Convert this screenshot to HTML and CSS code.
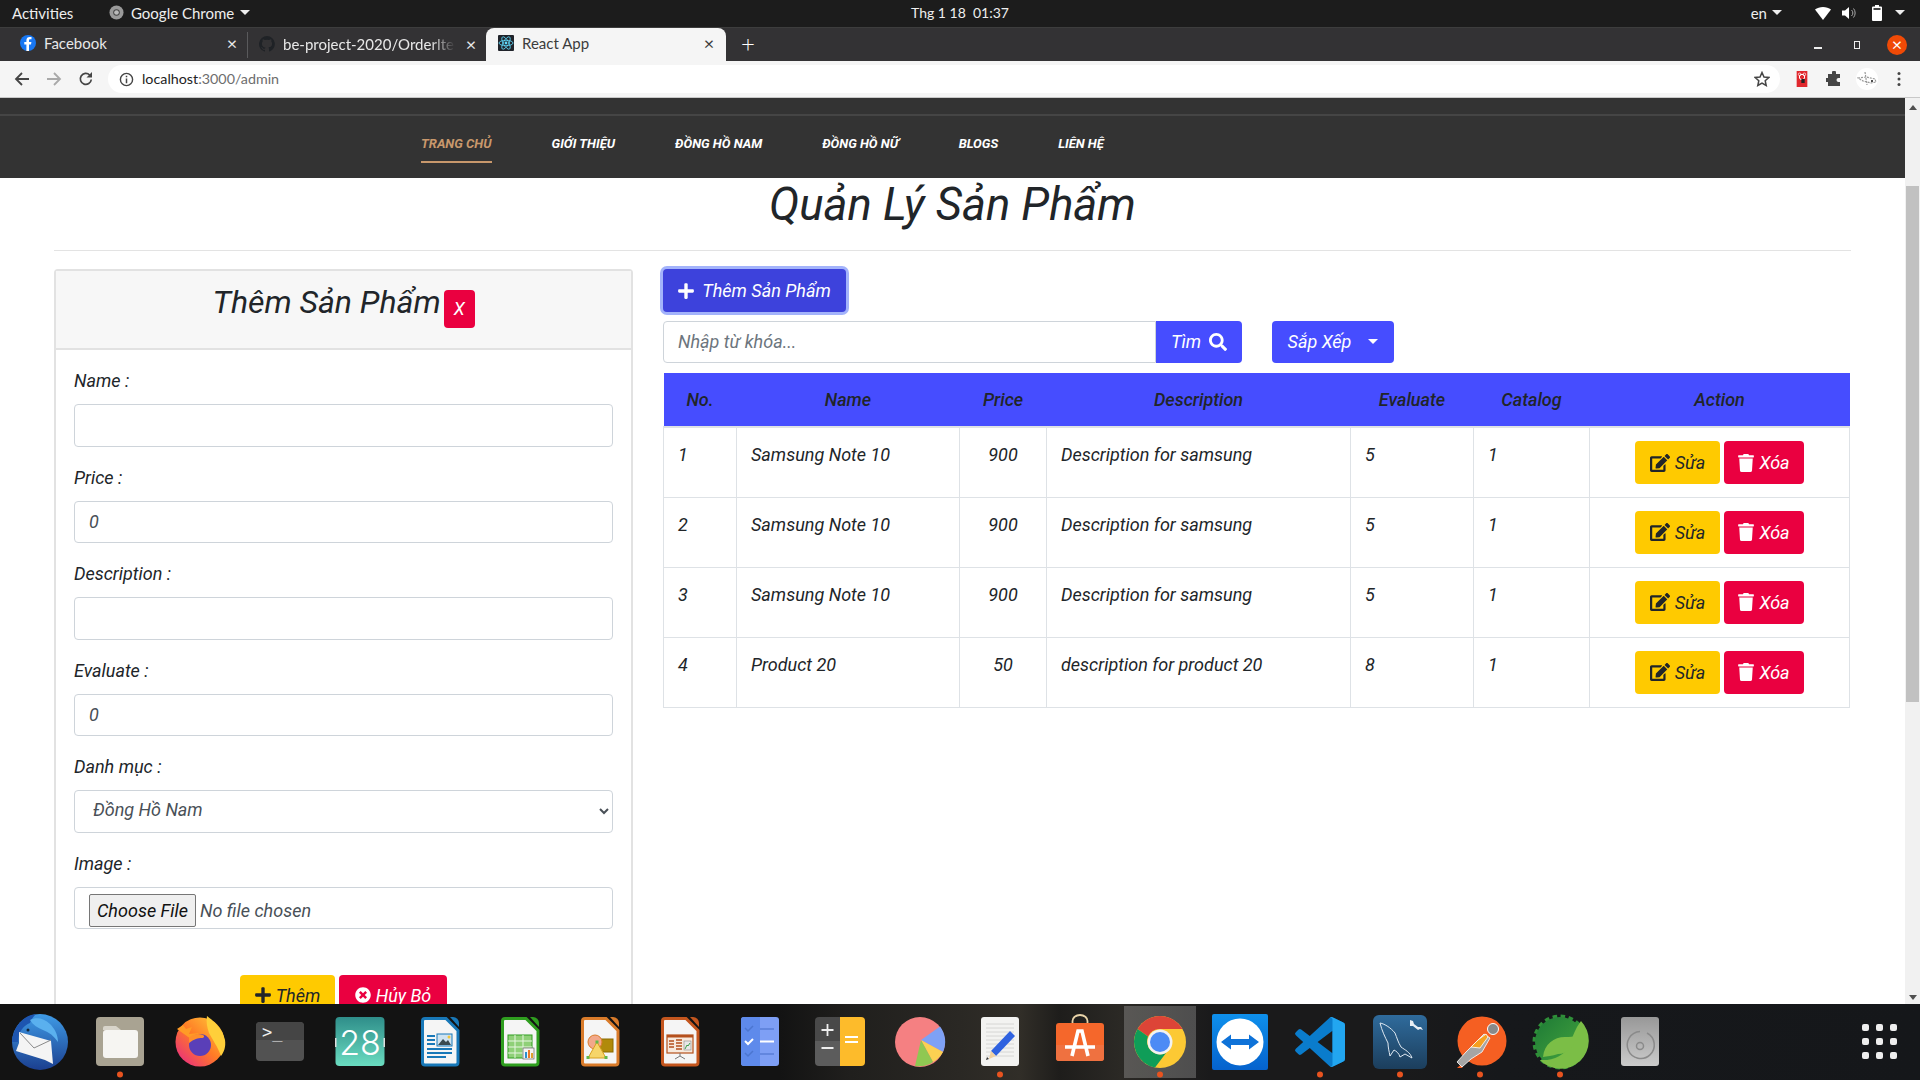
FILE: index.html
```html
<!DOCTYPE html>
<html lang="vi">
<head>
<meta charset="utf-8">
<title>React App</title>
<link rel="stylesheet" href="styles.css">
</head>
<body>
<svg class="sprite" aria-hidden="true">
  <defs>
    <symbol id="i-plus" viewBox="0 0 448 512"><path fill="currentColor" d="M416 208H272V64c0-17.67-14.33-32-32-32h-32c-17.67 0-32 14.33-32 32v144H32c-17.67 0-32 14.33-32 32v32c0 17.67 14.33 32 32 32h144v144c0 17.67 14.33 32 32 32h32c17.67 0 32-14.33 32-32V304h144c17.67 0 32-14.33 32-32v-32c0-17.67-14.33-32-32-32z"/></symbol>
    <symbol id="i-search" viewBox="0 0 512 512"><path fill="currentColor" d="M505 442.7L405.3 343c-4.5-4.5-10.6-7-17-7H372c27.6-35.3 44-79.7 44-128C416 93.1 322.9 0 208 0S0 93.1 0 208s93.1 208 208 208c48.3 0 92.7-16.4 128-44v16.3c0 6.4 2.5 12.5 7 17l99.7 99.7c9.4 9.4 24.6 9.4 33.9 0l28.3-28.3c9.4-9.4 9.4-24.6.1-34zM208 336c-70.7 0-128-57.2-128-128 0-70.7 57.2-128 128-128 70.7 0 128 57.2 128 128 0 70.7-57.2 128-128 128z"/></symbol>
    <symbol id="i-edit" viewBox="0 0 576 512"><path fill="currentColor" d="M402.6 83.2l90.2 90.2c3.8 3.8 3.8 10 0 13.8L274.4 405.6l-92.8 10.3c-12.4 1.4-22.9-9.1-21.5-21.5l10.3-92.8L388.8 83.2c3.8-3.8 10-3.8 13.8 0zm162-22.9l-48.8-48.8c-15.2-15.2-39.9-15.2-55.2 0l-35.4 35.4c-3.8 3.8-3.8 10 0 13.8l90.2 90.2c3.8 3.8 10 3.8 13.8 0l35.4-35.4c15.2-15.3 15.2-40 0-55.2zM384 346.2V448H64V128h229.8c3.2 0 6.2-1.3 8.5-3.5l40-40c7.6-7.6 2.2-20.5-8.5-20.5H48C21.5 64 0 85.5 0 112v352c0 26.5 21.5 48 48 48h352c26.5 0 48-21.5 48-48V306.2c0-10.7-12.9-16-20.5-8.5l-40 40c-2.2 2.3-3.5 5.3-3.5 8.5z"/></symbol>
    <symbol id="i-trash" viewBox="0 0 448 512"><path fill="currentColor" d="M432 32H312l-9.4-18.7A24 24 0 0 0 281.1 0H166.8a23.72 23.72 0 0 0-21.4 13.3L136 32H16A16 16 0 0 0 0 48v32a16 16 0 0 0 16 16h416a16 16 0 0 0 16-16V48a16 16 0 0 0-16-16zM53.2 467a48 48 0 0 0 47.9 45h245.8a48 48 0 0 0 47.9-45L416 128H32z"/></symbol>
    <symbol id="i-times" viewBox="0 0 512 512"><path fill="currentColor" d="M256 8C119 8 8 119 8 256s111 248 248 248 248-111 248-248S393 8 256 8zm121.6 313.1c4.7 4.7 4.7 12.3 0 17L338 377.6c-4.7 4.7-12.3 4.7-17 0L256 312l-65.1 65.6c-4.7 4.7-12.3 4.7-17 0L134.4 338c-4.7-4.7-4.7-12.3 0-17l65.6-65-65.6-65.1c-4.7-4.7-4.7-12.3 0-17l39.6-39.6c4.7-4.7 12.3-4.7 17 0l65 65.7 65.1-65.6c4.7-4.7 12.3-4.7 17 0l39.6 39.6c4.7 4.7 4.7 12.3 0 17L312 256l65.6 65.1z"/></symbol>
    <symbol id="i-dot" viewBox="0 0 80 76"><circle cx="40" cy="70.500" r="3" fill="#e8531f"/></symbol>
    <linearGradient id="g-tb" x1="0" y1="0" x2="0" y2="1"><stop offset="0" stop-color="#3f9be6"/><stop offset="1" stop-color="#1b3f8f"/></linearGradient>
    <linearGradient id="g-ff" x1="1" y1="0" x2="0" y2="1"><stop offset="0" stop-color="#ffd23a"/><stop offset=".5" stop-color="#ff7a26"/><stop offset="1" stop-color="#e5208f"/></linearGradient>
    <linearGradient id="g-cal" x1="0" y1="0" x2="0" y2="1"><stop offset="0" stop-color="#2f8e8a"/><stop offset="1" stop-color="#6adcc0"/></linearGradient>
    <linearGradient id="g-tv" x1="0" y1="0" x2="0" y2="1"><stop offset="0" stop-color="#0e90ec"/><stop offset="1" stop-color="#0562cd"/></linearGradient>
    <linearGradient id="g-my" x1="0" y1="0" x2="0" y2="1"><stop offset="0" stop-color="#2f6b9c"/><stop offset="1" stop-color="#1c3e5c"/></linearGradient>
    <linearGradient id="g-disk" x1="0" y1="0" x2="0" y2="1"><stop offset="0" stop-color="#989898"/><stop offset="1" stop-color="#cbcbcb"/></linearGradient>
    <linearGradient id="g-spring" x1="0" y1="0" x2="1" y2="1"><stop offset="0" stop-color="#1d7a36"/><stop offset=".7" stop-color="#3c9a3c"/></linearGradient>
    <symbol id="doc" viewBox="0 0 80 76"><path d="M25 14.500h21l12 12v32a2.500 2.500 0 0 1-2.500 2.500h-30.500a2.500 2.500 0 0 1-2.500-2.500v-41.500a2.500 2.500 0 0 1 2.500-2.500z" fill="#f5f5f5" stroke="currentColor" stroke-width="3"/><path d="M50 13h3a6 6 0 0 1 6 6v4z" fill="currentColor"/></symbol>
  </defs>
</svg>

<header class="topbar">
  <div class="top-left">
    <span class="top-activities">Activities</span>
    <span class="top-app">
      <svg class="top-chrome" viewBox="0 0 16 16"><circle cx="8" cy="8" r="7.500" fill="#9a9a9a"/><circle cx="8" cy="8" r="3.500" fill="#444"/><circle cx="8" cy="8" r="2.500" fill="#bbb"/></svg>
      Google Chrome <i class="caret"></i>
    </span>
  </div>
  <span class="top-clock">Thg 1 18&nbsp; 01:37</span>
  <div class="top-tray">
    <span class="top-lang">en <i class="caret"></i></span>
    <svg class="tray-wifi" viewBox="0 0 16 14"><path d="M0 3.500C4 0 12 0 16 3.500L8 14z" fill="#fff"/></svg>
    <svg class="tray-sound" viewBox="0 0 16 14"><path d="M0 4.500h3L7 1v12L3 9.500H0z" fill="#fff"/><path d="M9.500 4a4 4 0 0 1 0 6M11.500 2.500a7 7 0 0 1 0 9" stroke="#aaa" stroke-width="1" fill="none"/></svg>
    <svg class="tray-batt" viewBox="0 0 10 16"><path d="M3 0h4v1.500h2a1 1 0 0 1 1 1v12.500a1 1 0 0 1-1 1H1a1 1 0 0 1-1-1V2.500a1 1 0 0 1 1-1h2z" fill="#fff"/><rect x="1.500" y="3" width="7" height="2" fill="#444"/></svg>
    <i class="caret"></i>
  </div>
</header>

<div class="tabstrip">
  <div class="tab tab-fb">
    <svg class="fav" viewBox="0 0 16 16"><circle cx="8" cy="8" r="8" fill="#1877f2"/><path d="M9 16V9.500h2l.4-2.500H9V5.600c0-.8.3-1.300 1.400-1.300h1.100V2.100C11 2 10.300 2 9.700 2 7.700 2 6.400 3.200 6.400 5.300V7H4.300v2.500h2.100V16z" fill="#fff"/></svg>
    <span class="tab-title">Facebook</span><span class="tab-x">×</span>
  </div>
  <div class="tab tab-gh">
    <svg class="fav" viewBox="0 0 16 16"><path d="M8 0a8 8 0 0 0-2.500 15.600c.4.100.5-.2.500-.4v-1.400c-2.200.5-2.700-1-2.700-1-.4-.9-.9-1.200-.9-1.200-.7-.5.100-.5.100-.5.800.1 1.200.8 1.200.8.700 1.200 1.900.9 2.300.7.100-.5.300-.9.500-1.100-1.800-.2-3.600-.9-3.600-4 0-.9.300-1.600.8-2.100-.1-.2-.4-1 .1-2.100 0 0 .7-.2 2.200.8a7.700 7.700 0 0 1 4 0c1.500-1 2.200-.8 2.200-.8.400 1.100.2 1.900.1 2.100.5.600.8 1.300.8 2.100 0 3.100-1.900 3.700-3.700 3.900.3.300.6.800.6 1.500v2.200c0 .2.100.5.600.4A8 8 0 0 0 8 0z" fill="#1f2226"/></svg>
    <span class="tab-title tab-fade">be-project-2020/OrderIte</span><span class="tab-x">×</span>
  </div>
  <div class="tab tab-active">
    <svg class="fav" viewBox="0 0 16 16"><rect width="16" height="16" rx="1" fill="#20232a"/><g fill="none" stroke="#61dafb" stroke-width=".8"><ellipse cx="8" cy="8" rx="7" ry="2.700"/><ellipse cx="8" cy="8" rx="7" ry="2.700" transform="rotate(60 8 8)"/><ellipse cx="8" cy="8" rx="7" ry="2.700" transform="rotate(120 8 8)"/></g><circle cx="8" cy="8" r="1.400" fill="#61dafb"/></svg>
    <span class="tab-title">React App</span><span class="tab-x">×</span>
  </div>
  <span class="tab-new">+</span>
  <div class="winctl">
    <i class="win-min"></i>
    <i class="win-max"></i>
    <span class="win-close">×</span>
  </div>
</div>

<div class="toolbar">
  <svg class="tb-ico" viewBox="0 0 16 16"><path d="M15 8H2.500M8 2L2 8l6 6" fill="none" stroke="#454545" stroke-width="1.800"/></svg>
  <svg class="tb-ico" viewBox="0 0 16 16"><path d="M1 8h12.500M8 2l6 6-6 6" fill="none" stroke="#a9a9a9" stroke-width="1.800"/></svg>
  <svg class="tb-ico" viewBox="0 0 16 16"><path d="M13.300 8.500A5.500 5.500 0 1 1 11.700 4" fill="none" stroke="#454545" stroke-width="1.700"/><path d="M14 1v5.500H8.500z" fill="#454545"/></svg>
  <div class="omnibox">
    <svg class="omni-info" viewBox="0 0 16 16"><circle cx="8" cy="8" r="6.500" fill="none" stroke="#454545" stroke-width="1.500"/><path d="M7.200 4h1.600v1.600H7.200zM7.200 7h1.600v5H7.200z" fill="#454545"/></svg>
    <span class="omni-host">localhost</span><span class="omni-path">:3000/admin</span>
    <svg class="omni-star" viewBox="0 0 16 16"><path d="M8 1.500l2 4.500 4.800.5-3.600 3.200 1 4.800L8 12l-4.200 2.500 1-4.800L1.200 6.500 6 6z" fill="none" stroke="#454545" stroke-width="1.500"/></svg>
  </div>
  <div class="tb-ext">
    <svg class="ext-red" viewBox="0 0 16 24"><rect width="16" height="24" fill="#e0282e"/><circle cx="8" cy="9" r="4" fill="none" stroke="#fff" stroke-width="1.500"/><circle cx="4.500" cy="5" r="2" fill="none" stroke="#fff"/><circle cx="11.500" cy="5" r="2" fill="none" stroke="#fff"/><rect x="7" y="12" width="5" height="6" fill="#222"/></svg>
    <svg class="ext-puzzle" viewBox="0 0 16 16"><path d="M6 1.500a2 2 0 0 1 4 0V3h4v4h-1.500a2 2 0 0 0 0 4H14v4H2v-4H.8a2 2 0 0 1 0-4H2V3h4z" fill="#454545"/></svg>
    <span class="ext-circle"><svg viewBox="0 0 20 20"><path d="M1 9l8-1 9 2 1 3-5 1-8-2zM8 3l2 13" stroke="#999" stroke-width="1.200" fill="none" stroke-dasharray="2 1"/><circle cx="15" cy="12" r="1" fill="#111"/></svg></span>
    <svg class="ext-dots" viewBox="0 0 4 16"><circle cx="2" cy="2.500" r="1.500" fill="#454545"/><circle cx="2" cy="8" r="1.500" fill="#454545"/><circle cx="2" cy="13.500" r="1.500" fill="#454545"/></svg>
  </div>
</div>

<div class="viewport">
  <div class="page">
    <nav class="nav">
      <a class="nav-link is-active">TRANG CHỦ</a>
      <a class="nav-link">GIỚI THIỆU</a>
      <a class="nav-link">ĐỒNG HỒ NAM</a>
      <a class="nav-link">ĐỒNG HỒ NỮ</a>
      <a class="nav-link">BLOGS</a>
      <a class="nav-link">LIÊN HỆ</a>
    </nav>
    <main class="content">
      <h1 class="page-title">Quản Lý Sản Phẩm</h1>
      <hr class="rule">
      <div class="columns">
        <section class="card">
          <div class="card-head">
            <h3 class="card-title">Thêm Sản Phẩm</h3>
            <button class="btn btn-red btn-x">X</button>
          </div>
          <form class="card-body">
            <div class="group"><label class="lbl">Name :</label><input class="field" type="text"></div>
            <div class="group"><label class="lbl">Price :</label><input class="field" type="text" value="0"></div>
            <div class="group"><label class="lbl">Description :</label><input class="field" type="text"></div>
            <div class="group"><label class="lbl">Evaluate :</label><input class="field" type="text" value="0"></div>
            <div class="group"><label class="lbl">Danh mục :</label><select class="field"><option>Đồng Hồ Nam</option></select></div>
            <div class="group"><label class="lbl">Image :</label><input class="field field-file" type="file"></div>
            <div class="form-actions">
              <button class="btn btn-yellow btn-save" type="button"><svg class="ico ico-sm"><use href="#i-plus"/></svg> Thêm</button>
              <button class="btn btn-red btn-cancel" type="button"><svg class="ico ico-sm"><use href="#i-times"/></svg> Hủy Bỏ</button>
            </div>
          </form>
        </section>

        <section class="list">
          <button class="btn btn-add"><svg class="ico ico-sm"><use href="#i-plus"/></svg> Thêm Sản Phẩm</button>
          <div class="filters">
            <div class="search">
              <input class="field search-input" type="text" placeholder="Nhập từ khóa...">
              <button class="btn btn-blue btn-find">Tìm <svg class="ico ico-search"><use href="#i-search"/></svg></button>
            </div>
            <button class="btn btn-blue btn-sort">Sắp Xếp <i class="caret caret-sort"></i></button>
          </div>
          <table class="tbl">
            <colgroup><col class="c1"><col class="c2"><col class="c3"><col class="c4"><col class="c5"><col class="c6"><col class="c7"></colgroup>
            <thead><tr><th>No.</th><th>Name</th><th>Price</th><th>Description</th><th>Evaluate</th><th>Catalog</th><th>Action</th></tr></thead>
            <tbody>
              <tr><td>1</td><td>Samsung Note 10</td><td class="ctr">900</td><td>Description for samsung</td><td>5</td><td>1</td><td class="acts"><button class="btn btn-yellow"><svg class="ico ico-edit"><use href="#i-edit"/></svg> Sửa</button><button class="btn btn-red"><svg class="ico ico-sm"><use href="#i-trash"/></svg> Xóa</button></td></tr>
              <tr><td>2</td><td>Samsung Note 10</td><td class="ctr">900</td><td>Description for samsung</td><td>5</td><td>1</td><td class="acts"><button class="btn btn-yellow"><svg class="ico ico-edit"><use href="#i-edit"/></svg> Sửa</button><button class="btn btn-red"><svg class="ico ico-sm"><use href="#i-trash"/></svg> Xóa</button></td></tr>
              <tr><td>3</td><td>Samsung Note 10</td><td class="ctr">900</td><td>Description for samsung</td><td>5</td><td>1</td><td class="acts"><button class="btn btn-yellow"><svg class="ico ico-edit"><use href="#i-edit"/></svg> Sửa</button><button class="btn btn-red"><svg class="ico ico-sm"><use href="#i-trash"/></svg> Xóa</button></td></tr>
              <tr><td>4</td><td>Product 20</td><td class="ctr">50</td><td>description for product 20</td><td>8</td><td>1</td><td class="acts"><button class="btn btn-yellow"><svg class="ico ico-edit"><use href="#i-edit"/></svg> Sửa</button><button class="btn btn-red"><svg class="ico ico-sm"><use href="#i-trash"/></svg> Xóa</button></td></tr>
            </tbody>
          </table>
        </section>
      </div>
    </main>
  </div>
  <div class="scrollbar">
    <i class="sb-up"></i>
    <div class="sb-thumb"></div>
    <i class="sb-down"></i>
  </div>
</div>

<footer class="dock">
  <!-- Thunderbird -->
  <div class="dock-item"><svg class="dock-icon" viewBox="0 0 80 76">
    <circle cx="40" cy="38" r="28" fill="url(#g-tb)"/>
    <path d="M12 38C13 22 24 11 36 10c-3 3-5 6-6 9-6 2-12 9-12 19z" fill="#1d55b0"/>
    <path d="M30 16c6-3 14-2 20 4 4 4 8 10 8 18-4-6-9-10-15-12-5-2-10-5-13-10z" fill="#5ab0ee"/>
    <path d="M19 28l32 9 2 23-8-4-29-9 3-8z" fill="#f4f4f4"/>
    <path d="M20 29l14 15 17-8" fill="none" stroke="#8a8a8a" stroke-width="1"/>
    <circle cx="28" cy="26" r="1.500" fill="#123"/>
  </svg></div>
  <!-- Files -->
  <div class="dock-item"><svg class="dock-icon" viewBox="0 0 80 76">
    <rect x="16" y="13" width="48" height="49" rx="4" fill="#a9a392"/>
    <path d="M23 26v-2a2 2 0 0 1 2-2h11l5 4z" fill="#d8d4ca"/>
    <rect x="23" y="26" width="35" height="28" rx="3" fill="#f6f5f2"/>
    <use href="#i-dot" x="0" y="0" width="80" height="76"/>
  </svg></div>
  <!-- Firefox -->
  <div class="dock-item"><svg class="dock-icon" viewBox="0 0 80 76">
    <circle cx="40" cy="38" r="24.500" fill="url(#g-ff)"/>
    <path d="M47 12c5 4 15 11 18 24 1 7-1 12-4 16-3-9-9-17-12-23-2-6-3-11-2-17z" fill="#ffcf3a"/>
    <path d="M17 25l6-4 3 4 6-2-3 7 10-1-8 6z" fill="#ff9b26"/>
    <circle cx="40" cy="41" r="11" fill="#5a3fb8"/>
    <path d="M29 34c3-4 9-5 14-3 2 1 1 3-1 3-4 0-8 1-13 5z" fill="#ff8f2a"/>
  </svg></div>
  <!-- Terminal -->
  <div class="dock-item"><svg class="dock-icon" viewBox="0 0 80 76">
    <rect x="16" y="18" width="48" height="39" rx="4" fill="#525252"/>
    <path d="M16 36V22a4 4 0 0 1 4-4h40a4 4 0 0 1 4 4v14z" fill="#454545"/>
    <text x="22" y="34" class="dock-term">&gt;_</text>
  </svg></div>
  <!-- Calendar -->
  <div class="dock-item"><svg class="dock-icon" viewBox="0 0 80 76">
    <rect x="15.500" y="13" width="49" height="49" rx="4" fill="url(#g-cal)"/>
    <rect x="15" y="34" width="1.500" height="9" fill="#ddd"/><rect x="63.500" y="34" width="1.500" height="9" fill="#ddd"/>
    <text x="40" y="51" class="dock-cal">28</text>
  </svg></div>
  <!-- Writer -->
  <div class="dock-item"><svg class="dock-icon dock-writer" viewBox="0 0 80 76">
    <use href="#doc" width="80" height="76"/>
    <rect x="27" y="31" width="8" height="2" fill="#1878b8"/><rect x="27" y="35" width="8" height="2" fill="#1878b8"/><rect x="27" y="39" width="8" height="2" fill="#1878b8"/>
    <rect x="37" y="30" width="15" height="12" fill="#cfe3f1" stroke="#1878b8"/><path d="M38 41l5-6 3 3 2-2 3 5z" fill="#3a4a50"/><circle cx="49" cy="33" r="1.500" fill="#f2c63a"/>
    <rect x="27" y="44" width="25" height="2" fill="#1878b8"/><rect x="27" y="48" width="25" height="2" fill="#1878b8"/><rect x="27" y="52" width="19" height="2" fill="#1878b8"/>
  </svg></div>
  <!-- Calc -->
  <div class="dock-item"><svg class="dock-icon dock-calc" viewBox="0 0 80 76">
    <use href="#doc" width="80" height="76"/>
    <rect x="28" y="31" width="24" height="23" fill="#8fd078" stroke="#2f9e1f"/>
    <path d="M28 37h24M28 43h24M28 49h24M35 31v23M43 31v23" stroke="#e8f6e2" stroke-width="1"/>
    <rect x="43" y="44" width="11" height="11" fill="#f3f3f3" stroke="#666" stroke-width=".7"/>
    <rect x="45" y="48" width="2" height="6" fill="#2a8fd0"/><rect x="48" y="46" width="2" height="8" fill="#ea7a2c"/><rect x="51" y="49" width="2" height="5" fill="#e0a030"/>
  </svg></div>
  <!-- Draw -->
  <div class="dock-item"><svg class="dock-icon dock-draw" viewBox="0 0 80 76">
    <use href="#doc" width="80" height="76"/>
    <rect x="40" y="35" width="13" height="13" fill="#b08a0a" stroke="#8a6a00"/>
    <circle cx="35" cy="38" r="7" fill="#f2a88a" stroke="#d97b2a"/>
    <path d="M37 38l9 16H28z" fill="#f6d56a" stroke="#d8a020"/>
    <rect x="35.500" y="36.500" width="3" height="3" fill="#62b848"/><rect x="26.500" y="52" width="3" height="3" fill="#62b848"/><rect x="44.500" y="52" width="3" height="3" fill="#62b848"/>
  </svg></div>
  <!-- Impress -->
  <div class="dock-item"><svg class="dock-icon dock-impress" viewBox="0 0 80 76">
    <use href="#doc" width="80" height="76"/>
    <rect x="27" y="31" width="26" height="18" fill="#f7e9dc" stroke="#b5501c" stroke-width="1.200"/>
    <rect x="27" y="31" width="26" height="2.500" fill="#b5501c"/>
    <path d="M29 37h5M29 40h5M29 43h5M36 36h6M36 39h6M36 42h6M36 45h6" stroke="#b5501c" stroke-width="1.500"/>
    <rect x="44" y="37" width="7" height="9" fill="#e8e8e8" stroke="#777" stroke-width=".5"/><path d="M45 45l2-4 1 1 2-3" stroke="#3aa04a" fill="none"/>
    <path d="M40 49v3M40 52l-5 3M40 52l5 3" stroke="#777" stroke-width="1"/>
  </svg></div>
  <!-- Tasks -->
  <div class="dock-item"><svg class="dock-icon" viewBox="0 0 80 76">
    <rect x="21" y="13" width="38" height="49" rx="3" fill="#7e9ff5"/>
    <path d="M24 13h16v49H24a3 3 0 0 1-3-3V16a3 3 0 0 1 3-3z" fill="#5e8aeb"/>
    <path d="M25 24l3 3 5-5M25 49l3 3 5-5" stroke="#4c76d0" stroke-width="1.500" fill="none"/>
    <path d="M25 37l3 3 5-5" stroke="#fff" stroke-width="2" fill="none"/>
    <path d="M40 25h14M40 50h14" stroke="#5a7fd8" stroke-width="1.500"/><path d="M40 37.500h14" stroke="#fff" stroke-width="2"/>
  </svg></div>
  <!-- Calculator -->
  <div class="dock-item"><svg class="dock-icon" viewBox="0 0 80 76">
    <path d="M40 13h21a4 4 0 0 1 4 4v41a4 4 0 0 1-4 4H40z" fill="#fdbb2b"/>
    <path d="M40 13H19a4 4 0 0 0-4 4v20h25z" fill="#494949"/><path d="M40 62H19a4 4 0 0 1-4-4V37h25z" fill="#5c5c5c"/>
    <path d="M27.500 20v12M21.500 26h12M21.500 44h12" stroke="#eee" stroke-width="1.800"/>
    <path d="M45 33h13M45 38h13" stroke="#fff" stroke-width="1.800"/>
  </svg></div>
  <!-- Pie -->
  <div class="dock-item"><svg class="dock-icon" viewBox="0 0 80 76">
    <circle cx="40" cy="38" r="25" fill="#f58082"/>
    <path d="M41 36L60 22.500A25 25 0 0 1 63 48z" fill="#7ea1f5"/>
    <path d="M41 36l22 12a25 25 0 0 1-10 10z" fill="#fbd152"/>
    <path d="M41 36l12 22a25 25 0 0 1-18 4z" fill="#8fc852"/>
  </svg></div>
  <!-- Text editor -->
  <div class="dock-item"><svg class="dock-icon" viewBox="0 0 80 76">
    <rect x="21" y="13" width="38" height="49" rx="3" fill="#f3f3f1"/>
    <path d="M26 20h28M26 24h28M26 28h28M26 32h28M26 36h28M26 40h28M26 44h28M26 48h28M26 52h28" stroke="#d6d6d4" stroke-width="1"/>
    <path d="M50 27l5 5-19 20-5-5z" fill="#2f62e0"/>
    <path d="M31 47l5 5-7 3z" fill="#f0d0a0"/><path d="M27 53l-1 3 3-1z" fill="#333"/>
    <use href="#i-dot" width="80" height="76"/>
  </svg></div>
  <!-- App store -->
  <div class="dock-item"><svg class="dock-icon" viewBox="0 0 80 76">
    <path d="M32.500 20v-3a7.500 6 0 0 1 15 0v3" fill="none" stroke="#e8d3a8" stroke-width="1.800"/>
    <rect x="16" y="19" width="48" height="38" rx="3" fill="#f5672b"/>
    <path d="M16 41h48v13a3 3 0 0 1-3 3H19a3 3 0 0 1-3-3z" fill="#ef7140"/>
    <path d="M32 52l6-25h4l6 25M25 43h30" stroke="#fff" stroke-width="3.600" fill="none"/>
  </svg></div>
  <!-- Chrome -->
  <div class="dock-item dock-active"><svg class="dock-icon" viewBox="0 0 80 76">
    <circle cx="40" cy="38" r="26" fill="#fcc934"/>
    <path d="M17.500 25A26 26 0 0 1 62.500 25H40a13 13 0 0 0-12 7.500z" fill="#dd4437"/>
    <path d="M17.500 25A26 26 0 0 0 35 63.500L46 49a13 13 0 0 1-18-16.500z" fill="#0f9d58"/>
    <circle cx="40" cy="38" r="12.500" fill="#f2f2f2"/><circle cx="40" cy="38" r="10" fill="#4c8bf5"/>
    <use href="#i-dot" width="80" height="76"/>
  </svg></div>
  <!-- TeamViewer -->
  <div class="dock-item"><svg class="dock-icon" viewBox="0 0 80 76">
    <rect x="12" y="10" width="56" height="56" rx="2" fill="url(#g-tv)"/>
    <circle cx="40" cy="38" r="23.500" fill="#fff"/>
    <path d="M21 38l10-7.500V35h18v-4.500L59 38l-10 7.500V41H31v4.500z" fill="#0e72d8"/>
  </svg></div>
  <!-- VS Code -->
  <div class="dock-item"><svg class="dock-icon" viewBox="0 0 80 76">
    <g transform="translate(15 13) scale(.5)">
      <path fill="#0a7ccc" d="M96.500 10.800 75.900.9a6.200 6.200 0 0 0-7.100 1.200L29.500 38 12.400 25a4.200 4.200 0 0 0-5.300.2L1.600 30.300a4.200 4.200 0 0 0 0 6.200L16.400 50 1.600 63.500a4.200 4.200 0 0 0 0 6.200l5.500 5a4.200 4.200 0 0 0 5.300.2l17.100-13 39.300 35.900a6.200 6.200 0 0 0 7.100 1.200l20.600-9.900a6.200 6.200 0 0 0 3.500-5.600V16.400a6.200 6.200 0 0 0-3.500-5.600zM75 72.700 45.200 50 75 27.300z"/>
      <path fill="#22a6f0" d="M75.900.9 96.500 10.800a6.200 6.200 0 0 1 3.500 5.600v67.200a6.200 6.200 0 0 1-3.500 5.600L75.900 99.100a6.200 6.200 0 0 1-7.100-1.200A3.600 3.600 0 0 0 75 95.300V4.700a3.600 3.600 0 0 0-6.200-2.600A6.200 6.200 0 0 1 75.900.9z"/>
    </g>
    <use href="#i-dot" width="80" height="76"/>
  </svg></div>
  <!-- MySQL -->
  <div class="dock-item"><svg class="dock-icon" viewBox="0 0 80 76">
    <rect x="13" y="11" width="54" height="54" rx="6" fill="url(#g-my)"/>
    <path d="M20 19c5 1 11 5 15 10 2 5 3 9 6 14 4 3 9 5 11 11l-7-4-5 3c-1-4-4-6-6-7l-4 6c-1-5-2-9-2-13-3-6-6-12-8-20z" fill="none" stroke="#dfe9f2" stroke-width="1"/>
    <path d="M50 16l3 1 1 3 4 3h3l2 3-3-1-2 1-5-4-3 0z" fill="#e8eef4"/>
    <use href="#i-dot" width="80" height="76"/>
  </svg></div>
  <!-- Postman -->
  <div class="dock-item"><svg class="dock-icon" viewBox="0 0 80 76">
    <circle cx="42" cy="37" r="24.500" fill="#f55f22"/>
    <path d="M22 64l-5 0 9-8" fill="#f55f22"/>
    <path d="M26 48l-9 10 5 5 9-8 11-7 8-14-6-4z" fill="#a5a5a5" stroke="#fff" stroke-width=".8"/>
    <path d="M31 43l7-7 8-6 2 3-8 11z" fill="#f5a020" stroke="#fff" stroke-width=".8"/>
    <circle cx="53" cy="25" r="5.500" fill="#8a8a8a" stroke="#fff" stroke-width="1"/>
    <use href="#i-dot" width="80" height="76"/>
  </svg></div>
  <!-- Spring -->
  <div class="dock-item"><svg class="dock-icon" viewBox="0 0 80 76">
    <circle cx="40" cy="38" r="25.500" fill="none" stroke="#2f8f38" stroke-width="4" stroke-dasharray="4.500 3.500"/>
    <circle cx="40" cy="38" r="25" fill="url(#g-spring)"/>
    <path d="M61 17A27 27 0 0 1 20 56C32 57 45 52 50 40 53 32 55 25 61 17z" fill="#7bbe46"/>
    <path d="M23 53C24 40 34 33 45 33 50 33 54 33 57 31 55 42 48 50 38 50 32 52 27 52 23 53z" fill="#7bbe46"/>
    <use href="#i-dot" width="80" height="76"/>
  </svg></div>
  <!-- Disk -->
  <div class="dock-item"><svg class="dock-icon" viewBox="0 0 80 76">
    <rect x="21" y="13" width="38" height="49" rx="3" fill="url(#g-disk)"/>
    <path d="M47 29a13.500 13.500 0 1 1-7-1.500" fill="none" stroke="#8a8a8a" stroke-width="1.500"/>
    <circle cx="40" cy="42" r="3.500" fill="none" stroke="#8a8a8a" stroke-width="1.500"/>
  </svg></div>
  <!-- App grid -->
  <div class="dock-grid"><i></i><i></i><i></i><i></i><i></i><i></i><i></i><i></i><i></i></div>
</footer>
</body>
</html>
```
FILE: styles.css
```css
* { box-sizing: border-box; }
html, body { margin: 0; padding: 0; }
body {
  width: 1920px;
  height: 1080px;
  overflow: hidden;
  display: flex;
  flex-direction: column;
  font-family: Roboto, "Noto Sans", sans-serif;
  background: #fff;
  color: #212529;
}
.sprite { position: absolute; width: 0; height: 0; }

/* GNOME top bar */
.topbar {
  height: 27px;
  flex: none;
  background: #1c1c1c;
  color: #eee;
  display: grid;
  grid-template-columns: 1fr auto 1fr;
  align-items: center;
  padding: 0 12px 2px;
  font: 15px Lato, "Noto Sans", sans-serif;
}
.top-left { display: flex; align-items: center; }
.top-activities { min-width: 97px; }
.top-app { display: flex; align-items: center; gap: 6px; }
.top-chrome { width: 15px; height: 15px; margin-right: 1px; }
.caret {
  display: inline-block;
  width: 0;
  height: 0;
  border-left: 5px solid transparent;
  border-right: 5px solid transparent;
  border-top: 5px solid #eee;
}
.top-clock { text-align: center; font-size: 14px; }
.top-tray { display: flex; align-items: center; justify-content: flex-end; padding-right: 3px; }
.top-lang { display: flex; align-items: center; gap: 5px; margin-right: 33px; }
.tray-wifi { width: 16px; height: 14px; margin-right: 11px; }
.tray-sound { width: 16px; height: 14px; margin-right: 14px; }
.tray-batt { width: 10px; height: 16px; margin-right: 13px; }

/* Chrome tabs */
.tabstrip {
  height: 34px;
  flex: none;
  background: #333234;
  border-top: 1px solid #3d3d3d;
  display: flex;
  align-items: stretch;
  padding-left: 8px;
  font: 15px Lato, "Noto Sans", sans-serif;
  color: #e8e8e8;
}
.tab { display: flex; align-items: center; gap: 8px; width: 232px; padding: 0 2px 3px 12px; }
.tab-gh {
  border-left: 1px solid #5a5a5c;
  height: 26px;
  align-self: center;
  margin-left: 7px;
  width: 231px;
  padding: 0 1px 1px 11px;
}
.tab-active {
  width: 240px;
  margin-left: 8px;
  background: #f5f5f5;
  color: #3c3c3c;
  border-radius: 8px 8px 0 0;
  padding: 0 11px 3px 12px;
}
.fav { width: 16px; height: 16px; flex: none; }
.tab-title { flex: 1; white-space: nowrap; min-width: 0; }
.tab-fade { -webkit-mask-image: linear-gradient(90deg, #000 85%, transparent 99%); mask-image: linear-gradient(90deg, #000 85%, transparent 99%); }
.tab-x { font-size: 18px; line-height: 1; width: 12px; text-align: center; flex: none; }
.tab-new { font-size: 24px; line-height: 30px; width: 20px; margin-left: 12px; text-align: center; font-weight: 300; color: #fff; }
.winctl { margin-left: auto; display: flex; align-items: center; padding-right: 13px; }
.win-min { width: 8px; height: 1.500px; background: #eee; margin: 7px 32px 0 0; }
.win-max { width: 6px; height: 8px; border: 1px solid #eee; margin-right: 27.500px; }
.win-close {
  width: 20px;
  height: 20px;
  border-radius: 50%;
  background: #f04a06;
  color: #fff;
  font-size: 18px;
  line-height: 19px;
  text-align: center;
}

/* Chrome toolbar */
.toolbar {
  height: 37px;
  flex: none;
  background: #f5f5f5;
  border-bottom: 1px solid #c8c8c8;
  display: flex;
  align-items: center;
  padding-left: 14px;
  gap: 16px;
}
.tb-ico { width: 16px; height: 16px; flex: none; }
.omnibox {
  width: 1672px;
  height: 28px;
  margin-left: -2px;
  background: #fff;
  border-radius: 14px;
  display: flex;
  align-items: center;
  padding: 0 0 2px 11px;
  font: 14.300px Lato, "Noto Sans", sans-serif;
}
.omni-info { width: 15px; height: 15px; margin: 2px 8px 0 0; }
.omni-host { color: #222; }
.omni-path { color: #6d6d6d; }
.omni-star { width: 16px; height: 16px; margin: 2px 10px 0 auto; }
.tb-ext { display: flex; align-items: center; margin-left: -2px; }
.ext-red { width: 16px; height: 16px; margin-right: 16px; }
.ext-puzzle { width: 16px; height: 16px; margin-right: 14px; }
.ext-circle { width: 22px; height: 22px; border-radius: 50%; background: #fff; display: flex; margin-right: 19px; }
.ext-circle svg { width: 20px; height: 20px; margin: 1px; }
.ext-dots { width: 4px; height: 16px; }

/* Viewport */
.viewport { flex: 1; min-height: 0; display: flex; }
.page { flex: 1; min-width: 0; overflow: hidden; font-style: italic; font-size: 18px; line-height: 27px; }
.nav {
  height: 80px;
  background: #333;
  background-image: linear-gradient(#333 16px, #454545 16px, #454545 18px, #333 18px);
  display: flex;
  padding-left: 421px;
  gap: 60px;
}
.nav-link {
  height: 64px;
  margin-top: 18px;
  padding-top: 18px;
  font-size: 13px;
  font-weight: 700;
  line-height: 20px;
  color: #fff;
}
.nav-link.is-active { color: #c8986c; border-bottom: 2px solid #c8986c; height: 47px; }

.content { padding: 0 54px; }
.page-title { margin: 0; text-align: center; font-size: 45.400px; line-height: 54px; font-weight: 400; }
.rule { margin: 18px 0 18px; border: 0; border-top: 1px solid #e3e3e3; }
.columns { display: flex; align-items: flex-start; gap: 30px; }

/* Card */
.card { width: 579px; flex: none; border: 2px solid #e2e2e2; border-bottom: 0; border-radius: 4px 4px 0 0; }
.card-head {
  height: 79px;
  background: #f7f7f7;
  border-bottom: 2px solid #e2e2e2;
  display: flex;
  justify-content: center;
  align-items: flex-start;
  padding-top: 13px;
}
.card-title { margin: 0; font-size: 32px; line-height: 36px; font-weight: 400; }
.btn {
  border: 0;
  font: italic 18px/27px Roboto, sans-serif;
  height: 43px;
  padding: 8px 14px;
  border-radius: 4px;
  display: inline-flex;
  align-items: center;
  justify-content: center;
  gap: 5px;
  white-space: nowrap;
}
.btn-red { background: #ea0040; color: #fff; }
.btn-yellow { background: #ffca00; color: #212529; }
.btn-blue { background: #464dff; color: #fff; }
.btn-x { width: 31px; height: 38px; padding: 0 0 2px; margin: 6px 0 0 3px; }
.btn-save { width: 95px; padding-bottom: 10px; }
.btn-cancel { width: 108px; padding-bottom: 10px; }
.card-body { padding: 18px 18px 40px; }
.group { margin-bottom: 18px; }
.lbl { display: block; height: 27px; line-height: 26.600px; margin-bottom: 9px; }
.field {
  display: block;
  width: 100%;
  height: 42.500px;
  border: 1px solid #ced4da;
  border-radius: 4px;
  background: #fff;
  color: #495057;
  padding: 6px 14px;
  font: italic 18px/27px Roboto, sans-serif;
}
select.field { padding: 3px 14px 7px; }
.field-file { padding: 6px 14px 0; }
.field-file::file-selector-button {
  font: italic 18px/27px Roboto, sans-serif;
  color: #111;
  height: 33px;
  width: 107px;
  padding: 0;
  margin-right: 4px;
  border: 1px solid #767676;
  border-radius: 2px;
  background: #efefef;
}
.form-actions { display: flex; justify-content: center; gap: 4px; margin-top: 45.500px; }
.ico { display: inline-block; flex: none; }
.ico-sm { width: 16px; height: 18px; }
.ico-search { width: 18px; height: 18px; }
.ico-edit { width: 20px; height: 18px; }

/* List */
.list { flex: 1; min-width: 0; }
.btn-add { background: #3d42dc; color: #fff; width: 183px; box-shadow: 0 0 0 3px #a3b3fb; gap: 8px; display: flex; }
.filters { display: flex; margin-top: 9px; gap: 30px; }
.search { display: flex; }
.search-input { width: 493px; height: 42px; border-radius: 4px 0 0 4px; padding: 5px 14px 7px; }
.search-input::placeholder { color: #6c757d; }
.btn-find { width: 86px; height: 42px; border-radius: 0 4px 4px 0; gap: 8px; padding-bottom: 10px; }
.btn-sort { width: 122px; height: 42px; gap: 17px; padding-bottom: 10px; }
.btn-find .ico-search { margin-top: 1px; }
.caret-sort { border-left-width: 5px; border-right-width: 5px; border-top-color: #fff; }
.tbl { border-collapse: collapse; table-layout: fixed; width: 1186px; margin-top: 10px; }
.c1 { width: 73px; } .c2 { width: 223px; } .c3 { width: 87px; } .c4 { width: 304px; }
.c5 { width: 123px; } .c6 { width: 116px; } .c7 { width: 260px; }
.tbl th {
  height: 54px;
  background: #464dff;
  font-weight: 500;
  color: #212529;
  text-align: center;
  border-bottom: 2px solid #dee2e6;
  padding: 0;
}
.tbl td { height: 70px; border: 1px solid #dee2e6; padding: 13px 14px; vertical-align: top; }
.tbl td.ctr { text-align: center; }
.tbl td.acts { text-align: center; padding: 13px 0 0; white-space: nowrap; }
.acts .btn + .btn { margin-left: 4px; }
.acts .btn-yellow { width: 85px; }
.acts .btn-red { width: 80px; }

/* Scrollbar */
.scrollbar { width: 15px; flex: none; background: #f1f1f1; display: flex; flex-direction: column; align-items: center; }
.sb-up, .sb-down { width: 0; height: 0; border-left: 4px solid transparent; border-right: 4px solid transparent; }
.sb-up { border-bottom: 5px solid #505050; margin-top: 7px; }
.sb-thumb { width: 13px; height: 516px; background: #c1c1c1; margin-top: 76px; }
.sb-down { border-top: 5px solid #505050; margin-top: auto; margin-bottom: 4px; }

/* Dock */
.dock {
  height: 76px;
  flex: none;
  display: flex;
  background: linear-gradient(90deg, #131313 0, #131313 780px, #201f1d 850px, #2a2824 960px, #312e28 1020px, #1e1d1b 1060px, #2b2925 1120px, #1a1a1b 1210px, #1a1a1b 1400px, #16181b 1500px, #15171a 100%);
}
.dock-item { width: 80px; height: 76px; flex: none; }
.dock-icon { width: 80px; height: 76px; display: block; }
.dock-active { background: linear-gradient(rgba(255,255,255,.22), rgba(255,255,255,.22)) no-repeat 4px 2px / 72px 72px; }
.dock-writer { color: #1878b8; }
.dock-calc { color: #2f9e1f; }
.dock-draw { color: #d97b2a; }
.dock-impress { color: #c4561e; }
.dock-term { font: 17px "DejaVu Sans Mono", monospace; fill: #eee; }
.dock-cal { font: 300 34px Inter, "Noto Sans", sans-serif; fill: #fff; text-anchor: middle; }
.dock-grid {
  margin-left: auto;
  margin-right: 23px;
  margin-top: 20px;
  width: 35px;
  height: 35px;
  display: grid;
  grid-template-columns: repeat(3, 7px);
  grid-auto-rows: 7px;
  gap: 7px;
}
.dock-grid i { background: #eee; border-radius: 2px; }
```
